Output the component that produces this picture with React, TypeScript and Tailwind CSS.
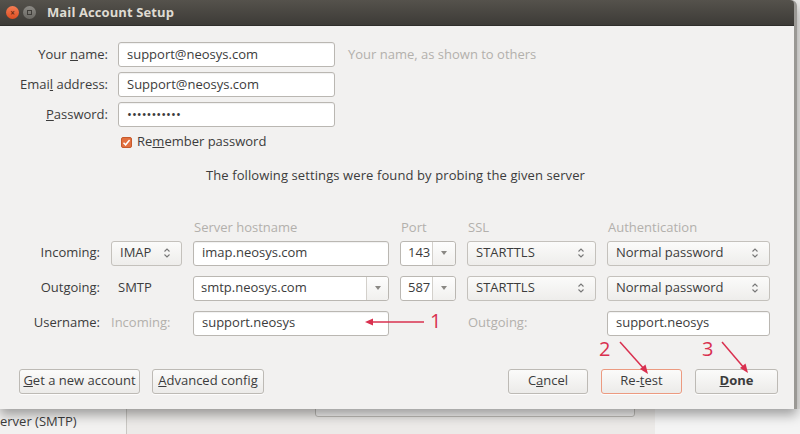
import React from "react";

const UpDown = () => (
  <svg width="8" height="12" viewBox="0 0 8 12" className="shrink-0">
    <path d="M1.5 4.5 L4 2 L6.5 4.5" fill="none" stroke="#777" strokeWidth="1.1" />
    <path d="M1.5 7.5 L4 10 L6.5 7.5" fill="none" stroke="#777" strokeWidth="1.1" />
  </svg>
);

const Tri = () => (
  <svg width="8" height="6" viewBox="0 0 8 6">
    <path d="M1 1 L7 1 L4 5 Z" fill="#8a8884" />
  </svg>
);

const Input = ({ value, w }: { value: string; w: string }) => (
  <div className={`${w} h-[25px] flex items-center px-[8px] bg-white border border-[#bab7b2] rounded-[3px] text-[13px] text-[#3c3c3c] shadow-[inset_0_1px_1px_rgba(0,0,0,0.06)]`}>
    {value}
  </div>
);

const Select = ({ value, w }: { value: string; w: string }) => (
  <div className={`${w} h-[25px] flex items-center justify-between pl-[8px] pr-[10px] bg-gradient-to-b from-[#fbfbfa] to-[#eeedeb] border border-[#c4c1bc] rounded-[3px] text-[13px] text-[#3c3c3c]`}>
    <span>{value}</span>
    <UpDown />
  </div>
);

const Combo = ({ value, w, btn }: { value: string; w: string; btn: string }) => (
  <div className={`${w} h-[25px] flex bg-white border border-[#bab7b2] rounded-[3px] text-[13px] text-[#3c3c3c]`}>
    <div className="flex-1 flex items-center pl-[7px]">{value}</div>
    <div className={`${btn} flex items-center justify-center border-l border-[#d3d0cb] bg-gradient-to-b from-[#fdfdfd] to-[#f1f0ee] rounded-r-[3px]`}>
      <Tri />
    </div>
  </div>
);

const Button = ({ children, w, accent, bold }: { children: React.ReactNode; w: string; accent?: boolean; bold?: boolean }) => (
  <div
    className={`${w} h-[25px] flex items-center justify-center rounded-[3px] border ${accent ? "border-[#ec9a80]" : "border-[#bdbab5]"} bg-gradient-to-b from-[#fbfbfa] to-[#ecebe9] text-[13px] text-[#3c3c3c] ${bold ? "font-bold" : ""} shadow-[0_1px_0_rgba(255,255,255,0.8)]`}
  >
    {children}
  </div>
);

export default function App() {
  return (
    <div className="w-[800px] h-[434px] overflow-hidden bg-[#e9e8e6] font-['Open_Sans','Noto_Sans',sans-serif] text-[#3c3c3c] relative">
      {/* Dialog */}
      <div className="relative z-10 w-[797px] h-[409px] flex flex-col bg-[#f2f1f0] border-r-[3px] border-[#9a9894] rounded-tr-[6px] shadow-[0_6px_12px_rgba(0,0,0,0.35)]">
        {/* Title bar */}
        <div className="h-[26px] flex items-center bg-gradient-to-b from-[#55524c] to-[#3d3b37] rounded-tr-[4px] border-b border-[#2f2e2b]">
          <div className="ml-[6px] w-[13px] h-[13px] rounded-full bg-gradient-to-b from-[#f47d54] to-[#dd4d1f] flex items-center justify-center text-[8px] leading-none text-[#6b2a12] font-bold">
            ×
          </div>
          <div className="ml-[4px] w-[13px] h-[13px] rounded-full bg-gradient-to-b from-[#8c8a85] to-[#6a6863] flex items-center justify-center">
            <div className="w-[5px] h-[5px] border border-[#3f3d39]" />
          </div>
          <div className="ml-[11px] text-[13px] font-bold text-[#dfdbd2] tracking-[0.1px]">Mail Account Setup</div>
        </div>

        {/* Body */}
        <div className="flex-1 flex flex-col relative">
          {/* Top form */}
          <div className="pt-[16px] flex flex-col gap-[5px]">
            <div className="flex items-center">
              <div className="w-[108px] text-right text-[13px]">
                Your <span className="underline">n</span>ame:
              </div>
              <div className="ml-[10px]">
                <Input value="support@neosys.com" w="w-[217px]" />
              </div>
              <div className="ml-[13px] text-[13px] text-[#b2b0ac]">Your name, as shown to others</div>
            </div>
            <div className="flex items-center">
              <div className="w-[108px] text-right text-[13px]">
                Emai<span className="underline">l</span> address:
              </div>
              <div className="ml-[10px]">
                <Input value="Support@neosys.com" w="w-[217px]" />
              </div>
            </div>
            <div className="flex items-center">
              <div className="w-[108px] text-right text-[13px]">
                <span className="underline">P</span>assword:
              </div>
              <div className="ml-[10px]">
                <Input value="•••••••••••" w="w-[217px]" />
              </div>
            </div>
            <div className="flex items-center h-[20px] ml-[121px]">
              <div className="w-[11px] h-[11px] rounded-[2px] bg-[#e2703f] border border-[#c75a2c] flex items-center justify-center">
                <svg width="9" height="9" viewBox="0 0 9 9">
                  <path d="M1.5 4.8 L3.6 6.8 L7.6 2" fill="none" stroke="#fff" strokeWidth="1.5" />
                </svg>
              </div>
              <div className="ml-[5px] text-[13px]">
                Re<span className="underline">m</span>ember password
              </div>
            </div>
          </div>

          <div className="mt-[14px] text-center text-[13px] pr-[3px] tracking-[0.1px]">
            The following settings were found by probing the given server
          </div>

          {/* Server settings */}
          <div className="mt-[32px] flex flex-col">
            <div className="flex text-[13px] text-[#b3b0ac] h-[20px] items-center">
              <div className="w-[193px]" />
              <div className="w-[207px] pl-[1px]">Server hostname</div>
              <div className="w-[67px] pl-[1px]">Port</div>
              <div className="w-[140px] pl-[1px]">SSL</div>
              <div className="pl-[1px]">Authentication</div>
            </div>
            <div className="flex items-center gap-[11px] mt-[3px]">
              <div className="w-[100px] text-right text-[13px]">Incoming:</div>
              <Select value="IMAP" w="w-[71px]" />
              <Input value="imap.neosys.com" w="w-[196px]" />
              <Combo value="143" w="w-[56px]" btn="w-[23px]" />
              <Select value="STARTTLS" w="w-[129px]" />
              <Select value="Normal password" w="w-[163px]" />
            </div>
            <div className="flex items-center gap-[11px] mt-[10px]">
              <div className="w-[100px] text-right text-[13px]">Outgoing:</div>
              <div className="w-[71px] pl-[7px] text-[13px]">SMTP</div>
              <Combo value="smtp.neosys.com" w="w-[196px]" btn="w-[22px]" />
              <Combo value="587" w="w-[56px]" btn="w-[23px]" />
              <Select value="STARTTLS" w="w-[129px]" />
              <Select value="Normal password" w="w-[163px]" />
            </div>
            <div className="flex items-center gap-[11px] mt-[10px]">
              <div className="w-[100px] text-right text-[13px]">Username:</div>
              <div className="w-[71px] text-[13px] text-[#b3b0ac]">Incoming:</div>
              <Input value="support.neosys" w="w-[196px]" />
              <div className="w-[56px]" />
              <div className="w-[129px] pl-[1px] text-[13px] text-[#b3b0ac]">Outgoing:</div>
              <Input value="support.neosys" w="w-[163px]" />
            </div>
          </div>

          {/* Buttons */}
          <div className="mt-[33px] flex items-center pl-[19px] pr-[16px]">
            <Button w="w-[121px]">
              <span><span className="underline">G</span>et a new account</span>
            </Button>
            <div className="ml-[12px]">
              <Button w="w-[112px]">
                <span><span className="underline">A</span>dvanced config</span>
              </Button>
            </div>
            <div className="ml-auto flex gap-[13px]">
              <Button w="w-[80px]">
                <span>C<span className="underline">a</span>ncel</span>
              </Button>
              <Button w="w-[81px]" accent>
                <span>Re-<span className="underline">t</span>est</span>
              </Button>
              <Button w="w-[83px]" bold>
                <span><span className="underline">D</span>one</span>
              </Button>
            </div>
          </div>

          {/* Annotations */}
          <svg className="absolute left-0 top-0 pointer-events-none" width="797" height="383" viewBox="0 26 797 383">
            <line x1="424" y1="322" x2="368" y2="322" stroke="#d9304f" strokeWidth="1.6" />
            <path d="M365 322 L373 318.5 L373 325.5 Z" fill="#d9304f" />
            <line x1="620" y1="342" x2="645" y2="370" stroke="#d9304f" strokeWidth="1.5" />
            <path d="M648 374 L640 369 L645.5 364.5 Z" fill="#d9304f" />
            <line x1="722" y1="342" x2="745" y2="369" stroke="#d9304f" strokeWidth="1.5" />
            <path d="M748 373 L740 368 L745.5 363.5 Z" fill="#d9304f" />
          </svg>
          <div className="absolute left-[430px] top-[285px] text-[20px] leading-none text-[#d9304f]">1</div>
          <div className="absolute left-[599px] top-[313px] text-[20px] leading-none text-[#d9304f]">2</div>
          <div className="absolute left-[702px] top-[313px] text-[20px] leading-none text-[#d9304f]">3</div>
        </div>
      </div>

      {/* Background window strip */}
      <div className="h-[25px] flex">
        <div className="w-[127px] bg-[#f2f1f0] border-r border-[#c9c7c3] flex items-center text-[13px] pt-[1px]">
          erver (SMTP)
        </div>
        <div className="w-[528px] bg-[#eceae8] relative">
          <div className="absolute left-[188px] top-[-6px] w-[320px] h-[14px] border border-[#bebcb8] rounded-b-[3px] bg-[#f3f2f1]" />
        </div>
        <div className="flex-1 bg-[#f4f4f4]" />
      </div>
    </div>
  );
}
